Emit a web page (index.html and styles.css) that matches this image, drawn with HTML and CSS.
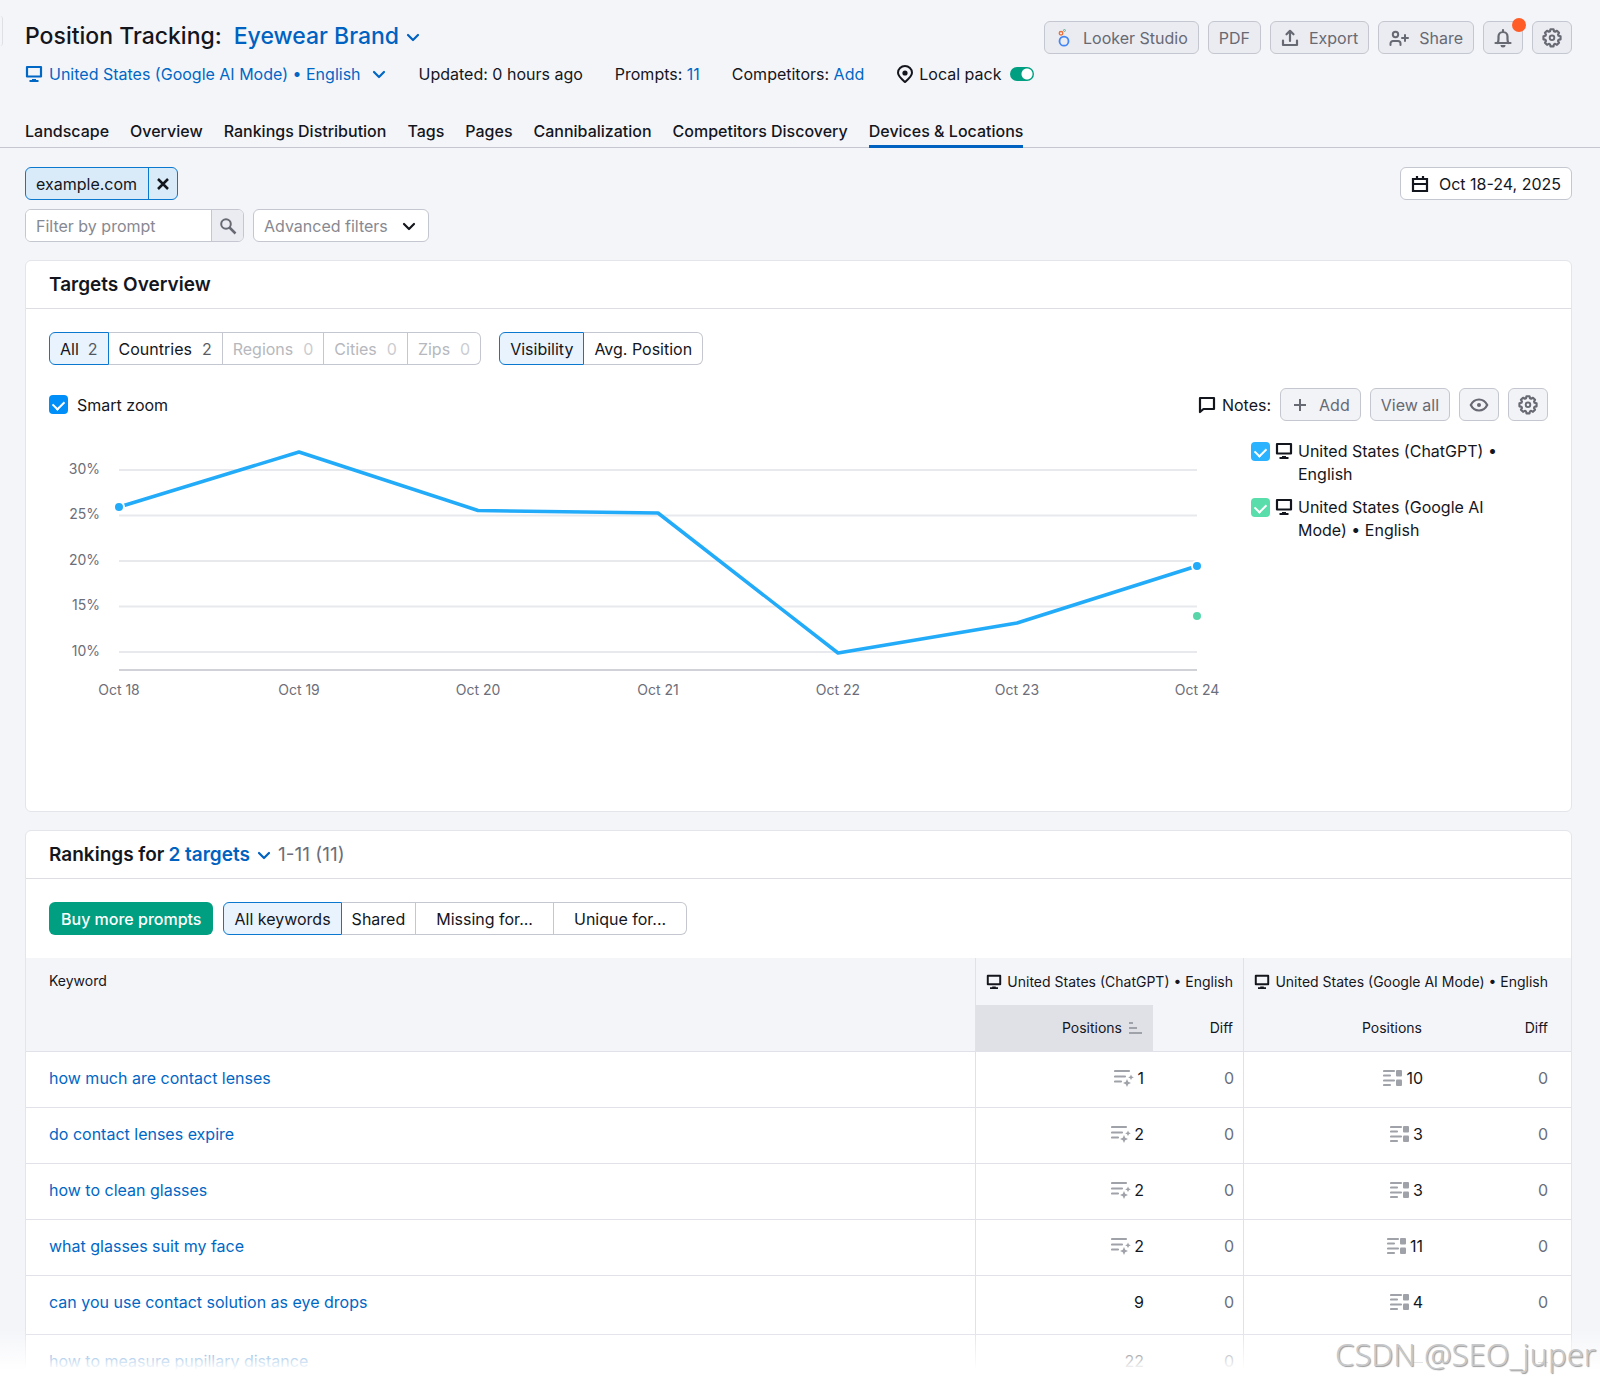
FILE: index.html
```html
<!DOCTYPE html>
<html lang="en">
<head>
    <meta charset="UTF-8">
    <meta name="viewport" content="width=device-width, initial-scale=1.0">
    <title>Position Tracking: Eyewear Brand</title>
    <link rel="stylesheet" href="styles.css">
</head>
<body>
    <!-- icons -->
    <svg class="sprite" aria-hidden="true">
        <symbol id="i-desktop" viewBox="0 0 18 18">
            <path d="M2 2h14v9.500H2z" fill="none" stroke="currentColor" stroke-width="2.200" stroke-linejoin="round"/>
            <path d="M7 14h4v1h2.500v2h-9v-2H7z" fill="currentColor"/>
        </symbol>
        <symbol id="i-chevron" viewBox="0 0 16 16">
            <path d="M3 6l5 5 5-5" fill="none" stroke="currentColor" stroke-width="2.200" stroke-linecap="round" stroke-linejoin="round"/>
        </symbol>
        <symbol id="i-gear" viewBox="0 0 20 20">
            <path d="M8.300 1.500h3.400l.5 2.200 1.300.6 2-1.100 2.300 2.300-1.100 2 .6 1.300 2.200.5v3.400l-2.200.5-.6 1.300 1.100 2-2.300 2.300-2-1.100-1.300.6-.5 2.200H8.300l-.5-2.200-1.300-.6-2 1.100-2.300-2.300 1.100-2-.6-1.300-2.200-.5V9.300l2.200-.5.6-1.300-1.100-2 2.300-2.300 2 1.100 1.300-.6z" transform="translate(1 -.1) scale(.9)" fill="none" stroke="currentColor" stroke-width="2.400" stroke-linejoin="round"/>
            <circle cx="10" cy="9.800" r="2.300" fill="none" stroke="currentColor" stroke-width="1.900"/>
        </symbol>
        <symbol id="i-ai" viewBox="0 0 20 18">
            <path d="M1 2h14M1 7.500h10M1 12.500h6" fill="none" stroke="currentColor" stroke-width="2.200" stroke-linecap="round"/>
            <path d="M13 10l1.200 2.800L17 14l-2.800 1.200L13 18l-1.200-2.800L9 14l2.800-1.200zM17 5.500l.9 1.900 1.900.9-1.900.9-.9 1.900-.9-1.900-1.900-.9 1.900-.9z" fill="currentColor"/>
        </symbol>
        <symbol id="i-local" viewBox="0 0 20 18">
            <path d="M1 2h10M1 6.500h6M1 11.500h10M1 16h6" fill="none" stroke="currentColor" stroke-width="2.200" stroke-linecap="round"/>
            <rect x="13" y="1" width="6" height="6.500" rx="1" fill="currentColor"/>
            <rect x="13" y="10.500" width="6" height="6.500" rx="1" fill="currentColor"/>
        </symbol>
    </svg>

    <header class="header">
        <div class="title-row">
            <h1 class="title">Position Tracking: <button class="title-btn" type="button">Eyewear Brand <svg class="icon-16"><use href="#i-chevron"/></svg></button></h1>
            <div class="actions">
                <button class="btn" type="button">
                    <svg class="icon-18" viewBox="0 0 18 20">
                        <circle cx="9" cy="13.500" r="5" fill="none" stroke="#4285f4" stroke-width="2"/>
                        <circle cx="5.700" cy="4.800" r="2" fill="none" stroke="#e8703a" stroke-width="1.500"/>
                        <circle cx="9.500" cy="1.600" r="1.100" fill="none" stroke="#5aa88c" stroke-width="1"/>
                    </svg>
                    Looker Studio
                </button>
                <button class="btn" type="button">PDF</button>
                <button class="btn" type="button">
                    <svg class="icon-18" viewBox="0 0 18 18"><path d="M9 12V2M5.500 5.300L9 1.800l3.500 3.500M2 11.500V16h14v-4.500" fill="none" stroke="currentColor" stroke-width="2.200" stroke-linecap="round" stroke-linejoin="round"/></svg>
                    Export
                </button>
                <button class="btn" type="button">
                    <svg class="icon-20" viewBox="0 0 20 18"><circle cx="6.500" cy="5.500" r="2.700" fill="none" stroke="currentColor" stroke-width="2"/><path d="M1.500 16v-1.500a2.500 2.500 0 0 1 2.500-2.500h5a2.500 2.500 0 0 1 2.500 2.500V16M16 6v6M13 9h6" fill="none" stroke="currentColor" stroke-width="2" stroke-linecap="round"/></svg>
                    Share
                </button>
                <button class="btn btn-icon" type="button" aria-label="Notifications">
                    <svg class="icon-20" viewBox="0 0 20 20"><path d="M2.500 15h15M4.500 15c.8-1 1-2 1-4V8.500a4.500 4.500 0 0 1 9 0V11c0 2 .2 3 1 4M10 3.500V2" fill="none" stroke="currentColor" stroke-width="2.200" stroke-linecap="round"/><path d="M7.500 17h5a2.500 2.500 0 0 1-5 0z" fill="currentColor"/></svg>
                    <span class="dot"></span>
                </button>
                <button class="btn btn-icon" type="button" aria-label="Settings"><svg class="icon-20"><use href="#i-gear"/></svg></button>
            </div>
        </div>
        <div class="meta">
            <button class="link meta-target" type="button"><svg class="icon-18"><use href="#i-desktop"/></svg> United States (Google AI Mode) • English <svg class="icon-16 gap-left"><use href="#i-chevron"/></svg></button>
            <span>Updated: 0 hours ago</span>
            <span>Prompts: <a class="link" href="#">11</a></span>
            <span>Competitors: <a class="link" href="#">Add</a></span>
            <label class="local">
                <svg class="icon-18" viewBox="0 0 18 18"><path d="M9 17c-4-3.500-7-6-7-9.300a7 6.700 0 0 1 14 0C16 11 13 13.500 9 17z" fill="none" stroke="currentColor" stroke-width="2"/><circle cx="9" cy="8" r="2.600" fill="currentColor"/></svg>
                Local pack
                <input class="toggle" type="checkbox" checked>
            </label>
        </div>
        <nav class="tabs">
            <a class="tab" href="#">Landscape</a>
            <a class="tab" href="#">Overview</a>
            <a class="tab" href="#">Rankings Distribution</a>
            <a class="tab" href="#">Tags</a>
            <a class="tab" href="#">Pages</a>
            <a class="tab" href="#">Cannibalization</a>
            <a class="tab" href="#">Competitors Discovery</a>
            <a class="tab active" href="#">Devices &amp; Locations</a>
        </nav>
    </header>

    <main class="main">
        <div class="filters">
            <div class="filter-row">
                <div class="chip">
                    <button class="chip-name" type="button">example.com</button>
                    <button class="chip-close" type="button" aria-label="Remove"><svg class="icon-16" viewBox="0 0 16 16"><path d="M3 3l10 10M13 3L3 13" fill="none" stroke="currentColor" stroke-width="2.500"/></svg></button>
                </div>
                <button class="date" type="button">
                    <svg class="icon-18" viewBox="0 0 18 18"><path d="M2 4h14v12H2zM2 9h14M6 1v4M12 1v4" fill="none" stroke="currentColor" stroke-width="2.200"/></svg>
                    Oct 18-24, 2025
                </button>
            </div>
            <form class="filter-row filter-left">
                <div class="search">
                    <input class="search-input" type="text" placeholder="Filter by prompt" aria-label="Filter by prompt">
                    <button class="search-btn" type="button" aria-label="Search"><svg class="icon-18" viewBox="0 0 18 18"><circle cx="7" cy="7" r="4.800" fill="none" stroke="currentColor" stroke-width="2"/><path d="M10.500 10.500l6 6" stroke="currentColor" stroke-width="2.500"/></svg></button>
                </div>
                <div class="select-box">
                    <select class="select" aria-label="Advanced filters">
                        <option>Advanced filters</option>
                    </select>
                    <svg class="icon-16 select-arrow"><use href="#i-chevron"/></svg>
                </div>
            </form>
        </div>

        <section class="card">
            <div class="card-head"><h2 class="card-title">Targets Overview</h2></div>
            <div class="card-body overview">
                <div class="groups">
                    <div class="group">
                        <button class="seg active" type="button">All <span class="count">2</span></button>
                        <button class="seg" type="button">Countries <span class="count">2</span></button>
                        <button class="seg" type="button" disabled>Regions <span class="count">0</span></button>
                        <button class="seg" type="button" disabled>Cities <span class="count">0</span></button>
                        <button class="seg" type="button" disabled>Zips <span class="count">0</span></button>
                    </div>
                    <div class="group">
                        <button class="seg active" type="button">Visibility</button>
                        <button class="seg" type="button">Avg. Position</button>
                    </div>
                </div>
                <div class="tools">
                    <label class="smart"><input class="check" type="checkbox" checked> Smart zoom</label>
                    <div class="notes">
                        <span class="notes-label"><svg class="icon-18" viewBox="0 0 18 18"><path d="M2 2h14v11H5.500L2 16z" fill="none" stroke="currentColor" stroke-width="2.200" stroke-linejoin="round"/></svg> Notes:</span>
                        <button class="btn" type="button"><svg class="icon-18" viewBox="0 0 18 18"><path d="M9 3v12M3 9h12" stroke="currentColor" stroke-width="2"/></svg> Add</button>
                        <button class="btn" type="button">View all</button>
                        <button class="btn btn-icon" type="button" aria-label="Show notes"><svg class="icon-20" viewBox="0 0 20 20"><path d="M1.800 10C3.500 6.500 6.500 4.500 10 4.500s6.500 2 8.200 5.500c-1.700 3.500-4.700 5.500-8.200 5.500S3.500 13.500 1.800 10z" fill="none" stroke="currentColor" stroke-width="2.200"/><circle cx="10" cy="10" r="2" fill="currentColor"/></svg></button>
                        <button class="btn btn-icon" type="button" aria-label="Chart settings"><svg class="icon-20"><use href="#i-gear"/></svg></button>
                    </div>
                </div>
                <div class="chart-row">
                    <svg class="chart" viewBox="0 0 1178 270" role="img" aria-label="Visibility">
                        <g class="grid">
                            <path d="M70 38h1078M70 83.500h1078M70 129h1078M70 174.500h1078M70 220h1078"/>
                            <path class="axis" d="M70 238h1078"/>
                        </g>
                        <g class="label label-y">
                            <text x="51" y="42">30%</text>
                            <text x="51" y="87">25%</text>
                            <text x="51" y="133">20%</text>
                            <text x="51" y="178">15%</text>
                            <text x="51" y="224">10%</text>
                        </g>
                        <g class="label label-x">
                            <text x="70" y="263">Oct 18</text>
                            <text x="250" y="263">Oct 19</text>
                            <text x="429" y="263">Oct 20</text>
                            <text x="609" y="263">Oct 21</text>
                            <text x="789" y="263">Oct 22</text>
                            <text x="968" y="263">Oct 23</text>
                            <text x="1148" y="263">Oct 24</text>
                        </g>
                        <polyline class="line" points="70,75 250,20 429,78.500 609,81 789,221 968,191 1148,134"/>
                        <circle class="point" cx="70" cy="75" r="5"/>
                        <circle class="point" cx="1148" cy="134" r="5"/>
                        <circle class="point green" cx="1148" cy="184" r="5"/>
                    </svg>
                    <div class="legend">
                        <label class="legend-item"><input class="check check-blue" type="checkbox" checked><svg class="icon-18"><use href="#i-desktop"/></svg><span class="legend-text">United States (ChatGPT) • English</span></label>
                        <label class="legend-item"><input class="check check-green" type="checkbox" checked><svg class="icon-18"><use href="#i-desktop"/></svg><span class="legend-text">United States (Google AI Mode) • English</span></label>
                    </div>
                </div>
            </div>
        </section>

        <section class="card">
            <div class="card-head">
                <h2 class="card-title">Rankings for <button class="title-btn" type="button">2 targets <svg class="icon-16"><use href="#i-chevron"/></svg></button></h2>
                <span class="range">1-11 (11)</span>
            </div>
            <div class="card-body rank-tools">
                <button class="buy" type="button">Buy more prompts</button>
                <div class="group">
                    <button class="seg active" type="button">All keywords</button>
                    <button class="seg" type="button">Shared</button>
                    <button class="seg seg-wide" type="button">Missing for...</button>
                    <button class="seg seg-wide" type="button">Unique for...</button>
                </div>
            </div>
            <table class="table">
                <colgroup>
                    <col>
                    <col class="col-pos">
                    <col class="col-diff">
                    <col class="col-pos2">
                    <col class="col-diff2">
                </colgroup>
                <thead>
                    <tr>
                        <th class="kw" rowspan="2">Keyword</th>
                        <th class="split" colspan="2"><span class="th-target"><svg class="icon-16"><use href="#i-desktop"/></svg> United States (ChatGPT) • English</span></th>
                        <th class="split last" colspan="2"><span class="th-target"><svg class="icon-16"><use href="#i-desktop"/></svg> United States (Google AI Mode) • English</span></th>
                    </tr>
                    <tr>
                        <th class="split sorted"><span class="th-target">Positions <svg class="icon-16 grey" viewBox="0 0 16 16"><path d="M2 3h4M2 8h8M2 13h13" fill="none" stroke="currentColor" stroke-width="2.200"/></svg></span></th>
                        <th>Diff</th>
                        <th class="split">Positions</th>
                        <th class="last">Diff</th>
                    </tr>
                </thead>
                <tbody>
                    <tr>
                        <td class="kw"><a class="link" href="#">how much are contact lenses</a></td>
                        <td class="split"><span class="pos"><svg class="icon-20 grey"><use href="#i-ai"/></svg> 1</span></td>
                        <td class="diff">0</td>
                        <td class="split"><span class="pos"><svg class="icon-20 grey"><use href="#i-local"/></svg> 10</span></td>
                        <td class="diff last">0</td>
                    </tr>
                    <tr>
                        <td class="kw"><a class="link" href="#">do contact lenses expire</a></td>
                        <td class="split"><span class="pos"><svg class="icon-20 grey"><use href="#i-ai"/></svg> 2</span></td>
                        <td class="diff">0</td>
                        <td class="split"><span class="pos"><svg class="icon-20 grey"><use href="#i-local"/></svg> 3</span></td>
                        <td class="diff last">0</td>
                    </tr>
                    <tr>
                        <td class="kw"><a class="link" href="#">how to clean glasses</a></td>
                        <td class="split"><span class="pos"><svg class="icon-20 grey"><use href="#i-ai"/></svg> 2</span></td>
                        <td class="diff">0</td>
                        <td class="split"><span class="pos"><svg class="icon-20 grey"><use href="#i-local"/></svg> 3</span></td>
                        <td class="diff last">0</td>
                    </tr>
                    <tr>
                        <td class="kw"><a class="link" href="#">what glasses suit my face</a></td>
                        <td class="split"><span class="pos"><svg class="icon-20 grey"><use href="#i-ai"/></svg> 2</span></td>
                        <td class="diff">0</td>
                        <td class="split"><span class="pos"><svg class="icon-20 grey"><use href="#i-local"/></svg> 11</span></td>
                        <td class="diff last">0</td>
                    </tr>
                    <tr class="row-tall">
                        <td class="kw"><a class="link" href="#">can you use contact solution as eye drops</a></td>
                        <td class="split">9</td>
                        <td class="diff">0</td>
                        <td class="split"><span class="pos"><svg class="icon-20 grey"><use href="#i-local"/></svg> 4</span></td>
                        <td class="diff last">0</td>
                    </tr>
                    <tr class="row-cut">
                        <td class="kw"><a class="link" href="#">how to measure pupillary distance</a></td>
                        <td class="split">22</td>
                        <td class="diff">0</td>
                        <td class="split"><span class="none"></span></td>
                        <td class="diff last"><span class="none"></span></td>
                    </tr>
                </tbody>
            </table>
        </section>
    </main>
    <div class="fade"></div>
    <div class="watermark">CSDN @SEO_juper</div>
</body>
</html>
```
FILE: styles.css
```css
* {
    margin: 0;
    padding: 0;
    box-sizing: border-box;
}

body {
    position: relative;
    min-height: 100vh;
    background: #f4f5f9;
    color: #14161d;
    font-family: Inter, "Liberation Sans", sans-serif;
    font-size: 16px;
    line-height: 24px;
}

button,
input,
select {
    font: inherit;
    color: inherit;
}

button {
    border: none;
    background: none;
    cursor: pointer;
}

a {
    color: inherit;
    text-decoration: none;
}

svg {
    flex: none;
}

.sprite {
    display: none;
}

.icon-16 {
    width: 16px;
    height: 16px;
}

.icon-18 {
    width: 18px;
    height: 18px;
}

.icon-20 {
    width: 20px;
    height: 20px;
}

.grey {
    color: #a0a2a9;
}

.link {
    color: #0067c5;
}

/* header */
.header {
    position: relative;
    padding: 21px 28px 0 25px;
    border-bottom: 1px solid #c4c7cf;
}

/* edge of the collapsed side menu */
.header::before {
    content: "";
    position: absolute;
    top: 16px;
    left: 0;
    width: 2px;
    height: 30px;
    border-right: 1px solid #dfe0e6;
    border-radius: 0 4px 4px 0;
}

.title-row {
    display: flex;
    justify-content: space-between;
    align-items: center;
}

.title {
    display: flex;
    align-items: center;
    gap: 12px;
    padding-bottom: 2px;
    font-size: 23px;
    line-height: 31px;
    font-weight: 500;
}

.title-btn {
    display: inline-flex;
    align-items: center;
    gap: 6px;
    color: #0062c0;
}

.actions,
.notes {
    display: flex;
    align-items: center;
    gap: 9px;
}

.btn {
    position: relative;
    display: flex;
    align-items: center;
    justify-content: center;
    gap: 10px;
    height: 33px;
    padding: 0 10px;
    border: 1px solid #c4c7cf;
    border-radius: 6px;
    background: #ebecf1;
    color: #676973;
}

.btn-icon {
    width: 40px;
    padding: 0;
}

.notes .btn {
    background: #f2f3f6;
}

.dot {
    position: absolute;
    top: -4px;
    right: -4px;
    width: 14px;
    height: 14px;
    border-radius: 50%;
    background: #ff5c26;
}

.meta {
    display: flex;
    align-items: center;
    gap: 32px;
    margin-top: 8px;
}

.meta-target {
    display: flex;
    align-items: center;
    gap: 6px;
}

.gap-left {
    margin-left: 4px;
}

.local {
    display: flex;
    align-items: center;
    gap: 5px;
}

.toggle {
    appearance: none;
    width: 24px;
    height: 14px;
    margin-left: 4px;
    border-radius: 7px;
    background: radial-gradient(circle at 17px 7px, #fff 5px, #009f81 6px);
}

.tabs {
    display: flex;
    gap: 21px;
    margin: 33px 0 -1px;
    font-weight: 500;
}

.tab {
    padding-bottom: 2px;
    border-bottom: 3px solid transparent;
}

.tab.active {
    border-bottom-color: #0062c0;
}

/* filters */
.main {
    padding: 19px 28px 0 25px;
}

.filters {
    display: grid;
    gap: 9px;
}

.filter-row {
    display: flex;
    justify-content: space-between;
}

.filter-left {
    justify-content: flex-start;
    gap: 9px;
}

.chip {
    display: flex;
    height: 33px;
    border: 1px solid #0b78cf;
    border-radius: 6px;
    background: #d9ebf9;
    overflow: hidden;
}

.chip-name {
    padding: 0 11px 0 10px;
}

.chip-close {
    display: flex;
    align-items: center;
    padding: 0 6px;
    border-left: 1px solid #0b78cf;
}

.date {
    display: flex;
    align-items: center;
    gap: 10px;
    height: 33px;
    padding: 0 10px;
    border: 1px solid #c4c7cf;
    border-radius: 6px;
    background: #fff;
}

.search {
    display: flex;
    width: 219px;
    height: 33px;
    border: 1px solid #c4c7cf;
    border-radius: 6px;
    background: #fff;
    overflow: hidden;
}

.search-input {
    flex: 1;
    min-width: 0;
    padding: 0 10px;
    border: none;
}

.search-input::placeholder {
    color: #878992;
}

.search-btn {
    display: flex;
    align-items: center;
    justify-content: center;
    width: 32px;
    border-left: 1px solid #c4c7cf;
    background: #ebecf1;
    color: #676973;
}

.select-box {
    position: relative;
}

.select {
    appearance: none;
    width: 176px;
    height: 33px;
    padding: 0 10px;
    border: 1px solid #c4c7cf;
    border-radius: 6px;
    background: #fff;
    color: #878992;
}

.select-arrow {
    position: absolute;
    top: 9px;
    right: 12px;
    pointer-events: none;
}

/* cards */
.card {
    margin-top: 18px;
    border: 1px solid #e3e5ea;
    border-radius: 6px;
    background: #fff;
    overflow: hidden;
}

.card-head {
    display: flex;
    align-items: center;
    gap: 6px;
    height: 48px;
    padding: 0 23px;
    border-bottom: 1px solid #dcdee4;
}

.card-title {
    display: flex;
    align-items: center;
    gap: 4px;
    font-size: 19px;
    font-weight: 600;
}

.range {
    color: #6c6e79;
    font-size: 19px;
}

.card-body {
    padding: 23px;
}

.overview {
    padding-bottom: 109px;
}

.groups {
    display: flex;
    gap: 18px;
}

.group {
    display: flex;
}

.seg {
    display: flex;
    align-items: center;
    gap: 10px;
    height: 33px;
    padding: 0 10px;
    border: 1px solid #c4c7cf;
    border-left: none;
    background: #fff;
}

.seg:first-child {
    border-left: 1px solid #c4c7cf;
    border-radius: 6px 0 0 6px;
}

.seg:last-child {
    border-radius: 0 6px 6px 0;
}

.seg.active {
    gap: 9px;
    border-color: #0b78cf;
    background: #e8f3fe;
}

.seg:disabled {
    color: #b6b8bd;
}

.seg-wide {
    padding: 0 20px;
}

.count {
    opacity: 0.7;
}

.tools {
    display: flex;
    align-items: center;
    justify-content: space-between;
    margin-top: 23px;
}

.smart {
    display: flex;
    align-items: center;
    gap: 9px;
}

.check {
    flex: none;
    appearance: none;
    width: 19px;
    height: 19px;
    border-radius: 4px;
    background: #008ff8;
}

.check::before {
    content: "";
    display: block;
    width: 9px;
    height: 6px;
    margin: 5px auto 0;
    border: solid #fff;
    border-width: 0 0 2px 2px;
    transform: rotate(-45deg);
}

.check-blue {
    background: #2bb3ff;
}

.check-green {
    background: #59ddaa;
}

.notes-label {
    display: flex;
    align-items: center;
    gap: 6px;
}

.chart-row {
    display: flex;
    align-items: flex-start;
    gap: 24px;
    margin-top: 11px;
}

.chart {
    flex: 1;
    min-width: 0;
}

.grid {
    stroke: #e8e9ec;
    stroke-width: 2;
}

.axis {
    stroke: #d0d2d7;
}

.label {
    fill: #6c6e79;
    font-size: 14px;
}

.label-y {
    text-anchor: end;
}

.label-x {
    text-anchor: middle;
}

.line {
    fill: none;
    stroke: #22abf9;
    stroke-width: 3.5;
    stroke-linejoin: round;
}

.point {
    fill: #22abf9;
    stroke: #fff;
    stroke-width: 2;
}

.point.green {
    fill: #59d6a9;
}

.legend {
    display: grid;
    gap: 10px;
    width: 297px;
    padding-top: 8px;
    line-height: 23px;
}

.legend-item {
    display: flex;
    gap: 5px;
}

.legend-item .check,
.legend-item svg {
    margin-top: 2px;
}

.legend-text {
    width: 210px;
}

/* rankings */
.rank-tools {
    display: flex;
    gap: 10px;
}

.buy {
    height: 33px;
    padding: 0 12px;
    border-radius: 6px;
    background: #009f81;
    color: #fff;
    font-weight: 500;
}

.table {
    width: 100%;
    table-layout: fixed;
    border-spacing: 0;
}

.col-pos {
    width: 178px;
}

.col-diff {
    width: 90px;
}

.col-pos2 {
    width: 189px;
}

.col-diff2 {
    width: 139px;
}

.table th {
    height: 47px;
    padding: 0 10px;
    background: #f4f5f9;
    font-size: 14px;
    font-weight: 400;
    text-align: right;
}

.table td {
    height: 56px;
    padding: 0 9px 3px;
    border-bottom: 1px solid #e0e1e9;
    text-align: right;
}

.table thead tr:last-child th,
.table th.kw {
    border-bottom: 1px solid #e0e1e9;
}

.table .row-tall td {
    height: 59px;
    padding-bottom: 6px;
}

.table .row-cut td {
    height: 48px;
    padding-top: 4px;
    padding-bottom: 0;
    border-bottom: none;
}

.table .kw {
    padding-left: 23px;
    text-align: left;
}

.table th.kw {
    padding-top: 11px;
    vertical-align: top;
}

.table .split {
    border-left: 1px solid #e0e1e9;
}

.table .last {
    padding-right: 23px;
}

.table .sorted {
    background: #e0e1e7;
}

.th-target,
.pos {
    display: flex;
    align-items: center;
    justify-content: flex-end;
    gap: 5px;
}

.pos {
    gap: 3px;
}

.diff {
    color: #6c6e79;
}

.none {
    display: inline-block;
    width: 10px;
    height: 1px;
    background: #6c6e79;
    vertical-align: middle;
}

/* bottom fade and watermark */
.fade {
    position: absolute;
    left: 0;
    right: 0;
    bottom: 0;
    height: 56px;
    background: linear-gradient(rgba(255, 255, 255, 0), #fff 75%);
}

.watermark {
    position: absolute;
    right: 4px;
    bottom: 8px;
    color: #c8c9cb;
    font-family: "Noto Sans", sans-serif;
    font-size: 31px;
    font-weight: 300;
    line-height: 44px;
    text-shadow: 1px 1px 1px #999;
}
```
